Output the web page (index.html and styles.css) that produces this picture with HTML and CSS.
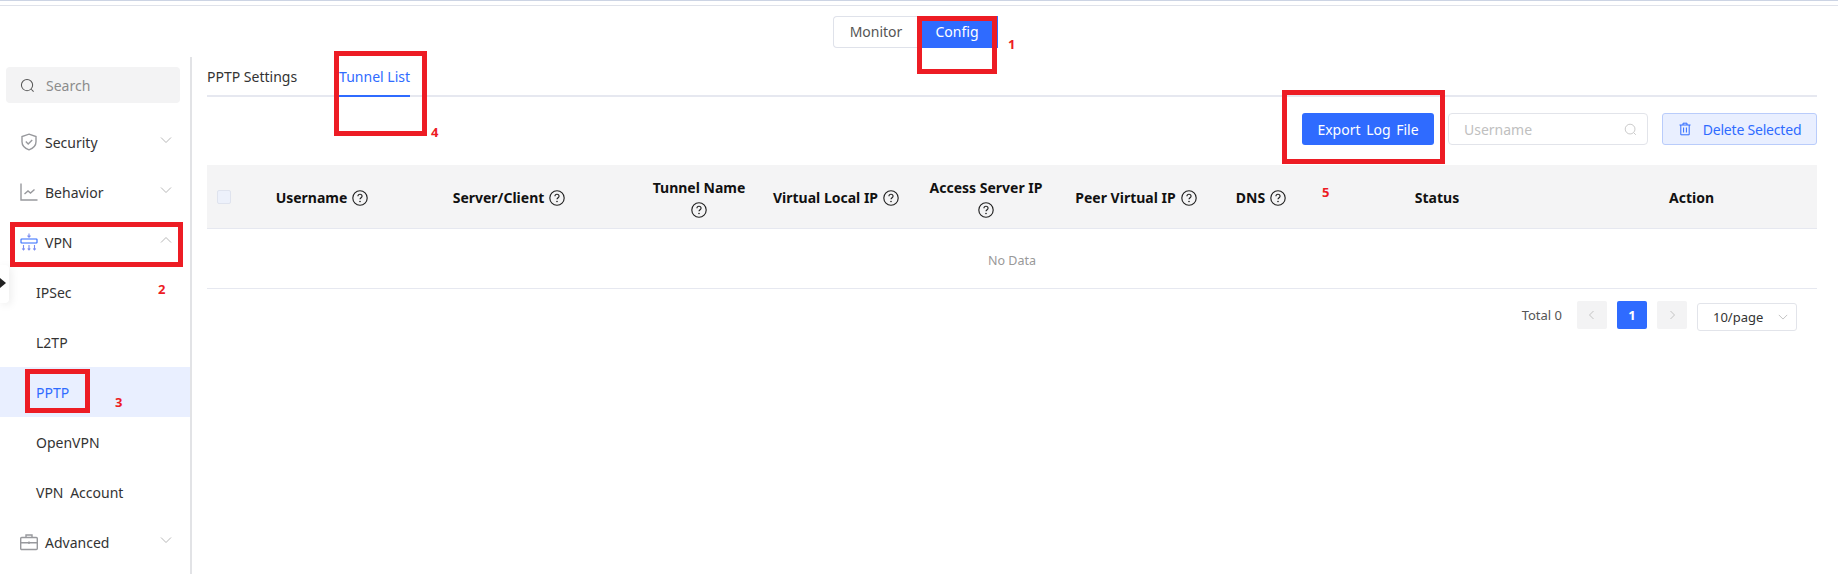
FILE: index.html
```html
<!DOCTYPE html>
<html lang="en">
<head>
    <meta charset="UTF-8">
    <title>PPTP Tunnel List</title>
    <link rel="stylesheet" href="styles.css">
</head>
<body>
    <div class="page">
        <!-- top switch -->
        <div class="topbar">
            <div class="switch">
                <span class="switch-item">Monitor</span>
                <span class="switch-item active">Config</span>
            </div>
        </div>
        <div class="layout">
            <!-- side menu -->
            <aside class="sidebar">
                <div class="side-search">
                    <svg class="icon-search" viewBox="0 0 16 16"><circle cx="7.5" cy="7.5" r="6"/><path d="M12 12l2.5 2.5"/></svg>
                    <span>Search</span>
                </div>
                <ul class="menu">
                    <li class="menu-item">
                        <svg class="menu-icon" viewBox="0 0 18 18"><path d="M9 1.200l7 2.300v5.200c0 3.800-3 6.600-7 8.100-4-1.500-7-4.300-7-8.100V3.500z"/><path d="M5.800 8.600l2.400 2.400 4-4"/></svg>
                        <span>Security</span>
                        <svg class="chevron" viewBox="0 0 12 12"><path d="M1 3.500l5 5 5-5"/></svg>
                    </li>
                    <li class="menu-item">
                        <svg class="menu-icon" viewBox="0 0 18 18"><path d="M1 0.500v16.500h16.500"/><path d="M4.500 11l3.500-3 2.500 2 4-3.500"/></svg>
                        <span>Behavior</span>
                        <svg class="chevron" viewBox="0 0 12 12"><path d="M1 3.500l5 5 5-5"/></svg>
                    </li>
                    <li class="menu-item">
                        <svg class="menu-icon vpn" viewBox="0 0 18 18"><path class="vpn-arrow" d="M9 0.500v3.500M7.500 2.700L9 4.200l1.500-1.500"/><rect x="1" y="6" width="16" height="4" rx="0.500"/><path class="vpn-arrow" d="M3.500 12v5M9 12v5M14.500 12v5M2.200 15.500l1.300 1.500 1.300-1.500M7.700 15.500L9 17l1.300-1.500M13.200 15.500l1.300 1.500 1.300-1.500"/></svg>
                        <span>VPN</span>
                        <svg class="chevron" viewBox="0 0 12 12"><path d="M1 8.500l5-5 5 5"/></svg>
                    </li>
                    <li class="menu-sub">IPSec</li>
                    <li class="menu-sub">L2TP</li>
                    <li class="menu-sub active">PPTP</li>
                    <li class="menu-sub">OpenVPN</li>
                    <li class="menu-sub">VPN Account</li>
                    <li class="menu-item">
                        <svg class="menu-icon" viewBox="0 0 18 18"><rect x="0.700" y="4.500" width="16.600" height="12" rx="1"/><path d="M6 4.500V2h6v2.500M0.700 9.800h16.600M9 8.600v2.400"/></svg>
                        <span>Advanced</span>
                        <svg class="chevron" viewBox="0 0 12 12"><path d="M1 3.500l5 5 5-5"/></svg>
                    </li>
                </ul>
            </aside>

            <main class="content">
                <div class="tabs">
                    <span class="tab">PPTP Settings</span>
                    <span class="tab active">Tunnel List</span>
                </div>
                <div class="toolbar">
                    <button class="btn btn-primary">Export Log File</button>
                    <div class="search-input">
                        <span>Username</span>
                        <svg class="icon-search" viewBox="0 0 16 16"><circle cx="7.500" cy="7.500" r="6"/><path d="M12 12l2.500 2.500"/></svg>
                    </div>
                    <button class="btn btn-light">
                        <svg class="icon-trash" viewBox="0 0 14 14"><path d="M1.500 3h11M5 3V1.200h4V3M2.800 3v9.800h8.400V3M5.600 5.500v5M8.400 5.500v5"/></svg>
                        Delete Selected
                    </button>
                </div>
                <div class="table-head">
                    <div class="cell cell-check"><span class="checkbox"></span></div>
                    <div class="cell">Username <svg class="help" viewBox="0 0 14 14"><use href="#help"/></svg></div>
                    <div class="cell">Server/Client <svg class="help" viewBox="0 0 14 14"><use href="#help"/></svg></div>
                    <div class="cell cell-wrap">Tunnel Name <svg class="help" viewBox="0 0 14 14"><use href="#help"/></svg></div>
                    <div class="cell">Virtual Local IP <svg class="help" viewBox="0 0 14 14"><use href="#help"/></svg></div>
                    <div class="cell cell-wrap">Access Server IP <svg class="help" viewBox="0 0 14 14"><use href="#help"/></svg></div>
                    <div class="cell">Peer Virtual IP <svg class="help" viewBox="0 0 14 14"><use href="#help"/></svg></div>
                    <div class="cell">DNS <svg class="help" viewBox="0 0 14 14"><use href="#help"/></svg></div>
                    <div class="cell">Status</div>
                    <div class="cell">Action</div>
                </div>
                <div class="table-empty">No Data</div>
                <div class="pager">
                    <span class="pager-total">Total 0</span>
                    <span class="pager-btn"><svg viewBox="0 0 10 10"><path d="M6.500 1L2.500 5l4 4"/></svg></span>
                    <span class="pager-btn active">1</span>
                    <span class="pager-btn"><svg viewBox="0 0 10 10"><path d="M3.500 1l4 4-4 4"/></svg></span>
                    <span class="pager-size">10/page <svg class="chevron" viewBox="0 0 12 12"><path d="M1 3.500l5 5 5-5"/></svg></span>
                </div>
            </main>
        </div>

        <!-- collapse handle on the left edge -->
        <div class="side-handle"></div>

        <!-- red marks drawn over the screenshot -->
        <div class="mark" style="left:917px;top:15px;width:80px;height:58px"></div>
        <div class="mark" style="left:10px;top:221px;width:173px;height:45px"></div>
        <div class="mark" style="left:25px;top:368px;width:65px;height:44px"></div>
        <div class="mark" style="left:334px;top:50px;width:93px;height:85px"></div>
        <div class="mark" style="left:1282px;top:89px;width:163px;height:74px"></div>
        <span class="mark-num" style="left:1008px;top:34px">1</span>
        <span class="mark-num" style="left:158px;top:279px">2</span>
        <span class="mark-num" style="left:115px;top:392px">3</span>
        <span class="mark-num" style="left:431px;top:122px">4</span>
        <span class="mark-num" style="left:1322px;top:182px">5</span>
    </div>

    <svg class="defs" width="0" height="0">
        <symbol id="help" viewBox="0 0 14 14">
            <circle cx="7" cy="7" r="6.300" fill="none" stroke="#222" stroke-width="1"/>
            <path d="M5.200 5.500C5.200 4.400 6 3.700 7 3.700s1.800.7 1.800 1.700c0 1.300-1.800 1.400-1.800 2.800" fill="none" stroke="#222" stroke-width="1"/>
            <circle cx="7" cy="10.100" r="0.700" fill="#222"/>
        </symbol>
    </svg>
</body>
</html>
```

FILE: styles.css
```css
:root {
    --primary-color: #2f6bff;
    --text-color: #333;
    --line-color: #e6e8f0;
    --head-background: #f4f4f5;
    --active-background: #e9efff;
}
* {
    box-sizing: border-box;
}
body {
    font-family: "Noto Sans", "Liberation Sans", sans-serif;
    font-size: 14px;
    color: var(--text-color);
    background-color: #fff;
    margin: 0;
}
.page {
    position: relative;
    height: 574px;
    overflow: hidden;
    border-top: 1px solid #ccd4e4;
}
.defs {
    position: absolute;
}

/* top switch */
.topbar {
    height: 56px;
    padding-top: 3px;
    border-top: 1px solid transparent;
    box-shadow: inset 0 3px 0 #fff, inset 0 4px 0 #dfe2ea;
    display: flex;
    justify-content: center;
}
.switch {
    display: flex;
    margin: 11px 0 0 -7px;
    height: 32px;
}
.switch-item {
    width: 80px;
    height: 32px;
    line-height: 30px;
    text-align: center;
    border: 1px solid #dfe2ea;
    color: #555;
}
.switch-item:first-child {
    border-radius: 4px 0 0 4px;
    border-right: none;
    width: 85px;
}
.switch-item.active {
    background-color: var(--primary-color);
    border-color: var(--primary-color);
    color: #fff;
    padding-right: 2px;
}

/* layout */
.layout {
    display: flex;
    height: 517px;
}
.sidebar {
    width: 192px;
    flex-shrink: 0;
    border-right: 2px solid #e2e3e6;
    padding-top: 10px;
}
.side-search {
    display: flex;
    align-items: center;
    gap: 11px;
    margin-left: 6px;
    width: 174px;
    height: 36px;
    padding-left: 14px;
    background-color: #f3f3f4;
    border-radius: 4px;
    color: #8c8c8c;
}
.icon-search {
    width: 15px;
    height: 15px;
    fill: none;
    stroke: #555;
    stroke-width: 1.100;
}
.menu {
    list-style: none;
    margin: 14px 0 0;
    padding: 0;
}
.menu-item {
    display: flex;
    align-items: center;
    height: 50px;
    padding: 0 20px 0;
    gap: 7px;
}
.menu-item span {
    flex: 1;
}
.menu-icon {
    width: 18px;
    height: 18px;
    fill: none;
    stroke: #98999d;
    stroke-width: 1.400;
}
.menu-icon.vpn {
    stroke: #2f6bff;
    stroke-width: 1.100;
}
.vpn-arrow {
    stroke: #7a8cf0;
}
.chevron {
    width: 12px;
    height: 12px;
    fill: none;
    stroke: #b8b8b8;
    stroke-width: 1;
    margin: 0 -2px 4px 0;
}
.menu-sub {
    height: 50px;
    line-height: 51px;
    padding-left: 36px;
}
.menu-sub:nth-child(8) {
    word-spacing: 3px;
}
.menu-sub.active {
    background-color: var(--active-background);
    color: var(--primary-color);
}

/* main area */
.content {
    flex: 1;
    padding: 0 21px 0 15px;
    min-width: 0;
}
.tabs {
    display: flex;
    gap: 41px;
    height: 40px;
    border-bottom: 2px solid var(--line-color);
}
.tab {
    height: 40px;
    line-height: 40px;
}
.tab:first-child {
    padding-right: 1px;
}
.tab.active {
    color: var(--primary-color);
    border-bottom: 2px solid var(--primary-color);
}
.toolbar {
    display: flex;
    justify-content: flex-end;
    gap: 14px;
    margin-top: 16px;
}
.btn {
    height: 32px;
    border-radius: 3px;
    border: 1px solid transparent;
    font: inherit;
    display: flex;
    align-items: center;
    justify-content: center;
    gap: 11px;
}
.btn-primary {
    width: 132px;
    background-color: var(--primary-color);
    color: #fff;
    word-spacing: 2px;
}
.btn-light {
    width: 155px;
    background-color: var(--active-background);
    border-color: #b9ccfb;
    color: var(--primary-color);
    letter-spacing: -0.2px;
}
.icon-trash {
    width: 14px;
    height: 14px;
    fill: none;
    stroke: var(--primary-color);
    stroke-width: 1;
}
.search-input {
    width: 200px;
    height: 32px;
    display: flex;
    align-items: center;
    justify-content: space-between;
    padding: 0 10px 0 15px;
    border: 1px solid #e2e4ea;
    border-radius: 4px;
    color: #c0c0c0;
}
.search-input .icon-search {
    width: 13px;
    height: 13px;
    stroke: #c4c4c4;
}

/* table */
.table-head {
    display: grid;
    grid-template-columns: 59px 112px 262px 118px 156px 144px 156px 94px 258px 1fr;
    height: 64px;
    margin-top: 20px;
    background-color: var(--head-background);
    border-bottom: 1px solid var(--line-color);
    font-weight: 700;
    color: #111;
}
.cell {
    display: flex;
    align-items: center;
    justify-content: center;
    gap: 5px;
    text-align: center;
    line-height: 20px;
    padding-top: 2px;
}
.cell-wrap {
    flex-direction: column;
    gap: 4px;
}
.cell-check {
    justify-content: flex-start;
    padding: 0 0 0 10px;
}
.checkbox {
    width: 14px;
    height: 14px;
    background-color: #edf1fb;
    border: 1px solid #dfe3ee;
    border-radius: 2px;
}
.help {
    width: 16px;
    height: 16px;
}
.table-empty {
    height: 60px;
    line-height: 63px;
    text-align: center;
    font-size: 12.500px;
    color: #999;
    border-bottom: 1px solid var(--line-color);
}

/* pager */
.pager {
    display: flex;
    align-items: flex-start;
    justify-content: flex-end;
    gap: 10px;
    margin-top: 12px;
    padding-right: 20px;
    font-size: 13px;
}
.pager-total {
    line-height: 28px;
    margin-right: 5px;
    color: #555;
}
.pager-btn {
    width: 30px;
    height: 28px;
    display: flex;
    align-items: center;
    justify-content: center;
    background-color: #f3f3f4;
    border-radius: 2px;
}
.pager-btn svg {
    width: 10px;
    height: 10px;
    fill: none;
    stroke: #c4c4c4;
    stroke-width: 1;
}
.pager-btn.active {
    background-color: var(--primary-color);
    color: #fff;
    font-weight: 700;
}
.pager-size {
    width: 100px;
    height: 28px;
    margin-top: 2px;
    padding: 0 8px 0 15px;
    display: flex;
    align-items: center;
    justify-content: space-between;
    border: 1px solid #e2e4ea;
    border-radius: 3px;
}
.pager-size .chevron {
    margin: 0;
    width: 10px;
    height: 10px;
}

/* overlays */
.side-handle {
    position: absolute;
    left: 0;
    top: 264px;
    width: 9px;
    height: 38px;
    background-color: #fff;
    border-radius: 0 4px 4px 0;
    box-shadow: 2px 2px 8px rgba(0, 0, 0, 0.08);
}
.side-handle::after {
    content: "";
    position: absolute;
    left: 0;
    top: 13px;
    border-left: 6px solid #222;
    border-top: 5px solid transparent;
    border-bottom: 5px solid transparent;
}
.mark {
    position: absolute;
    border: 5px solid #ed1c24;
}
.mark-num {
    position: absolute;
    font-size: 13px;
    font-weight: 700;
    color: #ed1c24;
}
```
